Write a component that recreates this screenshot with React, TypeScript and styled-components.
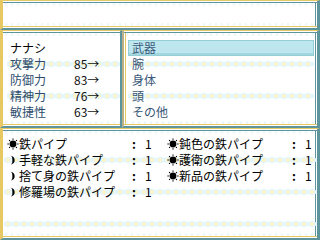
import React from "react";
import styled, { createGlobalStyle, css } from "styled-components";

const Global = createGlobalStyle`
  html, body { margin: 0; padding: 0; background: #ffffff; }
  body { width: 320px; height: 240px; overflow: hidden; }
`;

const YELLOW = "#e8c862";
const TEAL = "#5e949b";
const LABEL = "#2c4c6c";
const CAT = "#3a5878";
const FONT = `"Noto Sans CJK JP", "DejaVu Sans", sans-serif`;

const Screen = styled.div`
  width: 320px;
  height: 240px;
  display: flex;
  flex-direction: column;
  background: #ffffff;
  font-family: ${FONT};
  font-size: 12px;
  line-height: 16px;
  color: #000;
`;

const edgeDots = css`
  background-image:
    radial-gradient(circle, #edf8fb 0 1.2px, transparent 1.6px),
    radial-gradient(circle, #edf8fb 0 1.2px, transparent 1.6px);
  background-size: 6px 3px, 6px 3px;
  background-position: 0 2px, 0 calc(100% - 2px);
  background-repeat: repeat-x, repeat-x;
`;

const Window = styled.div`
  box-sizing: border-box;
  border-top: 1px solid ${YELLOW};
  border-bottom: 2px solid ${TEAL};
  border-left: 3px solid ${YELLOW};
  border-right: 3px solid ${TEAL};
  box-shadow:
    inset 0 1px 0 #ffffff,
    inset 0 2px 0 ${TEAL},
    inset 0 -1px 0 #ffffff,
    inset 0 -2px 0 ${YELLOW},
    inset -1px 0 0 #ffffff,
    inset -2px 0 0 ${TEAL};
  ${edgeDots};
`;

const HelpWindow = styled(Window)`
  height: 30px;
  flex: none;
`;

const Middle = styled.div`
  display: flex;
  height: 98px;
  flex: none;
`;

const StatusWindow = styled(Window)`
  width: 122px;
  flex: none;
  border-right-width: 2px;
  box-shadow:
    inset 0 1px 0 #ffffff,
    inset 0 2px 0 ${TEAL},
    inset 0 -1px 0 #ffffff,
    inset 0 -2px 0 ${YELLOW};
  padding: 9px 0 0 4px;
`;

const CategoryWindow = styled(Window)`
  flex: 1;
  border-left: 2px solid #b9b08a;
  box-shadow:
    inset 0 1px 0 #ffffff,
    inset 0 2px 0 ${TEAL},
    inset 0 -1px 0 #ffffff,
    inset 0 -2px 0 ${YELLOW},
    inset 1px 0 0 #ffffff,
    inset 2px 0 0 ${YELLOW},
    inset -1px 0 0 #ffffff,
    inset -2px 0 0 ${TEAL};
  padding: 9px 3px 0 4px;
`;

const ItemWindow = styled(Window)`
  flex: 1;
  padding: 7px 0 0 1px;
`;

const bandBg = css`
  background-image:
    radial-gradient(circle at 50% 50%, #fdf4c8 0 1.6px, #e4f6fb 1.7px 3.4px, transparent 3.6px),
    linear-gradient(#e4f6fb, #e4f6fb);
  background-size: 8px 8px, 100% 4px;
  background-position: 0 4px, 0 6px;
  background-repeat: repeat-x, no-repeat;
`;

const StatRow = styled.div<{ $band?: boolean }>`
  display: flex;
  height: 16px;
  align-items: center;
  padding-left: 3px;
  ${(p) => p.$band && bandBg};
`;

const StatLabel = styled.span<{ $name?: boolean }>`
  width: 64px;
  color: ${(p) => (p.$name ? "#000" : LABEL)};
`;

const StatValue = styled.span`
  color: #111;
`;

const CatRow = styled.div<{ $band?: boolean; $selected?: boolean }>`
  box-sizing: border-box;
  height: 16px;
  display: flex;
  align-items: center;
  padding-left: 4px;
  color: ${CAT};
  ${(p) => p.$band && bandBg};
  ${(p) =>
    p.$selected &&
    css`
      background: #bde6ee;
      border: 1px solid #94ced6;
      box-shadow: inset 0 -2px 0 #a3d6dd, inset 0 -3px 0 #bde6ee;
      padding-left: 3px;
    `};
`;

const ItemRow = styled.div<{ $band?: boolean }>`
  display: grid;
  grid-template-columns: 160px 152px;
  height: 16px;
  padding-left: 3px;
  ${(p) => p.$band && bandBg};
`;

const ItemCell = styled.div`
  display: flex;
  align-items: center;
  height: 16px;
`;

const IconBox = styled.span`
  width: 12px;
  height: 12px;
  flex: none;
  display: flex;
`;

const ItemName = styled.span`
  width: 113px;
  white-space: nowrap;
`;

const Colon = styled.span`
  width: 13px;
  font-weight: bold;
`;

const Count = styled.span``;

const Sun = () => (
  <svg width="12" height="12" viewBox="0 0 12 12">
    <circle cx="6" cy="6" r="3.4" fill="#000" />
    {[0, 45, 90, 135, 180, 225, 270, 315].map((a) => {
      const r = (a * Math.PI) / 180;
      return (
        <rect
          key={a}
          x={6 + Math.cos(r) * 4.9 - 0.6}
          y={6 + Math.sin(r) * 4.9 - 0.6}
          width="1.2"
          height="1.2"
          fill="#000"
        />
      );
    })}
  </svg>
);

const Moon = () => (
  <svg width="12" height="12" viewBox="0 0 12 12">
    <path d="M3.2 1.8 A4.5 4.4 0 0 1 3.2 10.6 A2.2 4.4 0 0 0 3.2 1.8 Z" fill="#000" />
  </svg>
);

type Item = { icon: "sun" | "moon"; name: string; count: number };

const rows: [Item | null, Item | null][] = [
  [
    { icon: "sun", name: "鉄パイプ", count: 1 },
    { icon: "sun", name: "鈍色の鉄パイプ", count: 1 },
  ],
  [
    { icon: "moon", name: " 手軽な鉄パイプ", count: 1 },
    { icon: "sun", name: "護衛の鉄パイプ", count: 1 },
  ],
  [
    { icon: "moon", name: " 捨て身の鉄パイプ", count: 1 },
    { icon: "sun", name: "新品の鉄パイプ", count: 1 },
  ],
  [{ icon: "moon", name: " 修羅場の鉄パイプ", count: 1 }, null],
  [null, null],
  [null, null],
];

const stats = [
  { label: "攻撃力", value: "85→" },
  { label: "防御力", value: "83→" },
  { label: "精神力", value: "76→" },
  { label: "敏捷性", value: "63→" },
];

const cats = ["武器", "腕", "身体", "頭", "その他"];

const Cell = ({ item }: { item: Item | null }) => (
  <ItemCell>
    {item && (
      <>
        <IconBox>{item.icon === "sun" ? <Sun /> : <Moon />}</IconBox>
        <ItemName>{item.name}</ItemName>
        <Colon>:</Colon>
        <Count>{item.count}</Count>
      </>
    )}
  </ItemCell>
);

export default function App() {
  return (
    <Screen>
      <Global />
      <HelpWindow />
      <Middle>
        <StatusWindow>
          <StatRow>
            <StatLabel $name>ナナシ</StatLabel>
          </StatRow>
          {stats.map((s, i) => (
            <StatRow key={s.label} $band={i % 2 === 0}>
              <StatLabel>{s.label}</StatLabel>
              <StatValue>{s.value}</StatValue>
            </StatRow>
          ))}
        </StatusWindow>
        <CategoryWindow>
          {cats.map((c, i) => (
            <CatRow key={c} $selected={i === 0} $band={i % 2 === 1}>
              {c}
            </CatRow>
          ))}
        </CategoryWindow>
      </Middle>
      <ItemWindow>
        {rows.map((r, i) => (
          <ItemRow key={i} $band={i % 2 === 1}>
            <Cell item={r[0]} />
            <Cell item={r[1]} />
          </ItemRow>
        ))}
      </ItemWindow>
    </Screen>
  );
}
